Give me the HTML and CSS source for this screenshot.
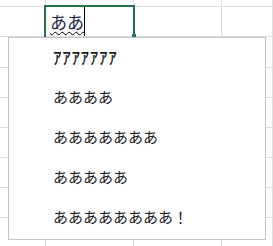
FILE: index.html
```html
<!DOCTYPE html>
<html lang="ja">
<head>
    <meta charset="UTF-8">
    <meta name="viewport" content="width=device-width, initial-scale=1.0">
    <title>Sheet</title>
    <link rel="stylesheet" href="styles.css">
</head>
<body>

    <div class="sheet">
        <!-- Grid -->
        <div class="grid">
            <div class="cell"></div><div class="cell"></div><div class="cell"></div><div class="cell"></div>

            <div class="cell"></div>
            <div class="cell active">
                <div class="selection"><span class="fill-handle"></span></div>
                <span class="typed">ああ</span><span class="caret"></span>
            </div>
            <div class="cell"></div><div class="cell"></div>

            <div class="cell"></div><div class="cell"></div><div class="cell"></div><div class="cell"></div>
            <div class="cell"></div><div class="cell"></div><div class="cell"></div><div class="cell"></div>
            <div class="cell"></div><div class="cell"></div><div class="cell"></div><div class="cell"></div>
            <div class="cell"></div><div class="cell"></div><div class="cell"></div><div class="cell"></div>
            <div class="cell"></div><div class="cell"></div><div class="cell"></div><div class="cell"></div>
            <div class="cell"></div><div class="cell"></div><div class="cell"></div><div class="cell"></div>
            <div class="cell"></div><div class="cell"></div><div class="cell"></div><div class="cell"></div>
        </div>

        <!-- IME candidate list -->
        <ul class="candidates">
            <li class="half">ｱｱｱｱｱｱｱ</li>
            <li>ああああ</li>
            <li>あああああああ</li>
            <li>あああああ</li>
            <li>ああああああああ！</li>
        </ul>
    </div>

</body>
</html>
```

FILE: styles.css
```css
/* Global Styles */
body {
    margin: 0;
    padding: 0;
    background-color: #fff;
    font-family: "Noto Sans CJK JP", "Noto Sans", sans-serif;
    color: #1a1a1a;
}

.sheet {
    position: relative;
    width: 273px;
    height: 246px;
    overflow: hidden;
}

/* Grid */
.grid {
    display: grid;
    grid-template-columns: 46px 88px 88px 1fr;
    grid-template-rows: 7px 30px 31px 30px 30px 30px 30px 30px 30px;
}

.cell {
    border-right: 1px solid #dedede;
    border-bottom: 1px solid #dedede;
}

.cell.active {
    position: relative;
    display: flex;
    align-items: stretch;
    padding-left: 4px;
}

.selection {
    position: absolute;
    top: -2px;
    left: -2px;
    right: -2px;
    bottom: -1px;
    border: 2px solid #217346;
    border-bottom: none;
}

.fill-handle {
    position: absolute;
    right: -3px;
    bottom: 0;
    width: 4px;
    height: 3px;
    background: #217346;
}

.typed {
    font-size: 17px;
    line-height: 29px;
    color: #1f2a44;
    text-decoration: underline wavy #000;
    text-decoration-thickness: 1px;
    text-underline-offset: 2px;
}

.caret {
    width: 1px;
    background: #000;
}

/* Candidate list */
.candidates {
    position: absolute;
    top: 37px;
    left: 8px;
    width: 256px;
    height: 201px;
    margin: 0;
    padding: 0;
    list-style: none;
    background: #fff;
    border: 1px solid #c6c6c6;
}

.candidates li {
    height: 40px;
    line-height: 37px;
    padding-left: 44px;
    font-size: 15px;
}

.candidates li.half {
    font-size: 17px;
    font-weight: 500;
    letter-spacing: 0.7px;
}
```
